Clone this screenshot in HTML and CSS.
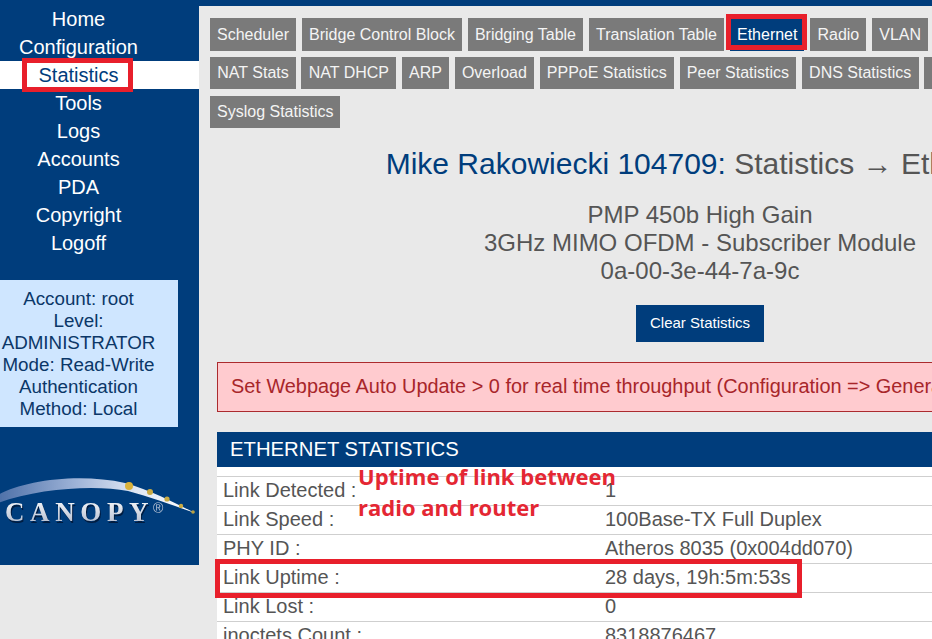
FILE: index.html
```html
<!DOCTYPE html>
<html lang="en">
<head>
<meta charset="utf-8">
<title>Ethernet Statistics</title>
<link rel="stylesheet" href="styles.css">
</head>
<body>
<div class="page">
  <aside class="sidebar">
    <nav class="nav">
      <a class="nav-item">Home</a>
      <a class="nav-item">Configuration</a>
      <a class="nav-item active">Statistics</a>
      <a class="nav-item">Tools</a>
      <a class="nav-item">Logs</a>
      <a class="nav-item">Accounts</a>
      <a class="nav-item">PDA</a>
      <a class="nav-item">Copyright</a>
      <a class="nav-item">Logoff</a>
    </nav>
    <div class="account">
      <div>Account: root</div>
      <div>Level: ADMINISTRATOR</div>
      <div>Mode: Read-Write</div>
      <div>Authentication Method: Local</div>
    </div>
    <svg class="logo" width="199" height="70" viewBox="0 0 199 70" role="img" aria-label="Canopy">
      <defs>
        <linearGradient id="arc" x1="0" x2="1" y1="0" y2="0">
          <stop offset="0" stop-color="#4d70a8"/>
          <stop offset="0.4" stop-color="#9fb4d8"/>
          <stop offset="0.7" stop-color="#dfe7f4"/>
          <stop offset="1" stop-color="#ffffff"/>
        </linearGradient>
        <linearGradient id="letters" x1="0" x2="0" y1="0" y2="1">
          <stop offset="0" stop-color="#ffffff"/>
          <stop offset="1" stop-color="#aab5ca"/>
        </linearGradient>
        <filter id="soft"><feGaussianBlur stdDeviation="0.6"/></filter>
      </defs>
      <g filter="url(#soft)">
        <path d="M-2 25 C25 10 80 3 125 13 C150 20 175 33 195 43 C170 34 150 27 128 21 C95 15 40 18 -2 33 Z" fill="url(#arc)"/>
        <circle cx="129" cy="16" r="4" fill="#d9b23a"/>
        <circle cx="150" cy="22" r="3" fill="#c9ab45"/>
        <circle cx="167" cy="29" r="2.6" fill="#c9ab45"/>
        <circle cx="181" cy="36" r="2.2" fill="#c9ab45"/>
        <circle cx="193" cy="42" r="1.8" fill="#b9a040"/>
        <text class="logo-shadow" x="6" y="53">CANOPY</text>
        <text class="logo-text" x="5" y="51">CANOPY</text>
        <text class="logo-reg" x="153" y="43">®</text>
      </g>
    </svg>
  </aside>
  <main class="main">
    <div class="tabs">
      <div class="tab-row tab-row-first">
        <a class="tab">Scheduler</a>
        <a class="tab">Bridge Control Block</a>
        <a class="tab">Bridging Table</a>
        <a class="tab">Translation Table</a>
        <a class="tab tab-active">Ethernet</a>
        <a class="tab">Radio</a>
        <a class="tab">VLAN</a>
      </div>
      <div class="tab-row tab-row-second">
        <a class="tab">NAT Stats</a>
        <a class="tab">NAT DHCP</a>
        <a class="tab">ARP</a>
        <a class="tab">Overload</a>
        <a class="tab">PPPoE Statistics</a>
        <a class="tab">Peer Statistics</a>
        <a class="tab">DNS Statistics</a>
        <a class="tab tab-blank"></a>
      </div>
      <div class="tab-row">
        <a class="tab">Syslog Statistics</a>
      </div>
    </div>
    <div class="content">
      <h1 class="title"><span class="title-name">Mike Rakowiecki 104709:</span> Statistics → Ethernet</h1>
      <div class="device">
        <div>PMP 450b High Gain</div>
        <div>3GHz MIMO OFDM - Subscriber Module</div>
        <div>0a-00-3e-44-7a-9c</div>
      </div>
      <div class="actions"><button class="clear">Clear Statistics</button></div>
      <div class="alert">Set Webpage Auto Update &gt; 0 for real time throughput (Configuration =&gt; General)</div>
      <section class="panel">
        <h2 class="panel-head">ETHERNET STATISTICS</h2>
        <table class="stats">
          <tr><td>Link Detected :</td><td>1</td></tr>
          <tr><td>Link Speed :</td><td>100Base-TX Full Duplex</td></tr>
          <tr><td>PHY ID :</td><td>Atheros 8035 (0x004dd070)</td></tr>
          <tr><td>Link Uptime :</td><td>28 days, 19h:5m:53s</td></tr>
          <tr><td>Link Lost :</td><td>0</td></tr>
          <tr><td>inoctets Count :</td><td>8318876467</td></tr>
        </table>
      </section>
    </div>
  </main>
  <div class="mark mark-nav"></div>
  <div class="mark mark-tab"></div>
  <div class="mark mark-row"></div>
  <div class="note">Uptime of link between<br>radio and router</div>
</div>
</body>
</html>
```

FILE: styles.css
```css
html, body {
  margin: 0;
  padding: 0;
  height: 100%;
  overflow: hidden;
  background: #e9e9e9;
}
body {
  font-family: "Liberation Sans", Arial, sans-serif;
  color: #555;
}
.page {
  position: relative;
  display: flex;
  width: 932px;
  height: 639px;
  overflow: hidden;
}
.sidebar {
  flex: 0 0 199px;
  height: 565px;
  box-sizing: border-box;
  padding-top: 5px;
  background: #003d7c;
}
.nav-item {
  display: block;
  box-sizing: border-box;
  height: 28px;
  padding-right: 42px;
  font-size: 20px;
  line-height: 28px;
  text-align: center;
  color: #fff;
}
.nav-item.active {
  background: #fff;
  color: #003d7c;
}
.account {
  box-sizing: border-box;
  width: 178px;
  height: 147px;
  margin-top: 23px;
  padding: 8px 21px 0 0;
  background: #cfe6ff;
  color: #0b3768;
  font-size: 18.8px;
  line-height: 22px;
  text-align: center;
}
.logo {
  display: block;
  margin-top: 43px;
}
.logo-text, .logo-shadow {
  font-family: "Liberation Serif", serif;
  font-weight: bold;
  font-size: 27px;
  letter-spacing: 5.6px;
}
.logo-text { fill: url(#letters); }
.logo-shadow { fill: #001c40; }
.logo-reg {
  font-family: "Liberation Sans", sans-serif;
  font-size: 14px;
  fill: #b4c0d4;
}
.main {
  flex: 0 0 auto;
  width: 733px;
  border-top: 6px solid #003d7c;
  box-sizing: border-box;
  height: 639px;
  overflow: hidden;
}
.tabs {
  padding: 12px 0 0 11px;
}
.tab-row {
  display: flex;
  gap: 5.4px;
  margin-bottom: 7px;
  white-space: nowrap;
}
.tab-row-first { gap: 6px; margin-bottom: 6px; }
.tab {
  flex: none;
  display: block;
  height: 32px;
  padding: 0 7px;
  background: #7a7a7a;
  color: #f4f4f4;
  font-size: 16px;
  line-height: 32px;
}
.tab-row-first .tab { height: 33px; line-height: 33px; }
.tab-row-second .tab { padding: 0 7.3px; }
.tab-active { background: #003d7c; color: #fff; }
.tab-row-second .tab-blank { width: 40px; padding: 0; }
.content {
  width: 966px;
  margin-left: 18px;
  text-align: center;
}
.title {
  margin: 19px 0 0;
  font-size: 30px;
  font-weight: normal;
  line-height: 34px;
  color: #555;
}
.title-name { color: #003d7c; }
.device {
  margin-top: 20px;
  font-size: 24px;
  line-height: 28px;
}
.actions { margin-top: 20px; }
.clear {
  display: block;
  width: 128px;
  height: 37px;
  margin: 0 auto;
  padding: 0 0 2px;
  border: 0;
  background: #003d7c;
  color: #fff;
  font-family: inherit;
  font-size: 15px;
}
.alert {
  box-sizing: border-box;
  height: 50px;
  margin-top: 20px;
  padding-left: 13px;
  background: #ffcbcf;
  border: 1px solid #ab2b2e;
  color: #a8262a;
  font-size: 19.9px;
  line-height: 47px;
  text-align: left;
  white-space: nowrap;
}
.panel {
  margin-top: 20px;
  background: #fff;
  text-align: left;
}
.panel-head {
  height: 35px;
  margin: 0;
  padding-left: 13px;
  background: #003d7c;
  color: #fff;
  font-size: 20.3px;
  font-weight: normal;
  line-height: 34px;
}
.stats {
  width: 100%;
  margin-top: 9px;
  border-collapse: collapse;
  font-size: 20px;
  color: #555;
  table-layout: fixed;
}
.stats td {
  height: 28px;
  padding: 0 0 2px 6px;
  box-sizing: border-box;
  border-top: 1px solid #cfcfcf;
  line-height: 26px;
}
.stats tr { height: 29px; }
.stats td:first-child { width: 382px; }
.mark {
  position: absolute;
  box-sizing: border-box;
  border: 5px solid #e81f2b;
}
.mark-nav { left: 22px; top: 58px; width: 111px; height: 34px; }
.mark-tab { left: 726px; top: 14px; width: 81px; height: 36px; }
.mark-row { left: 215px; top: 559px; width: 587px; height: 39px; }
.note {
  position: absolute;
  left: 358px;
  top: 461px;
  color: #e42733;
  font-family: "Open Sans", sans-serif;
  font-size: 22px;
  font-weight: 700;
  line-height: 31px;
  white-space: nowrap;
}
```
